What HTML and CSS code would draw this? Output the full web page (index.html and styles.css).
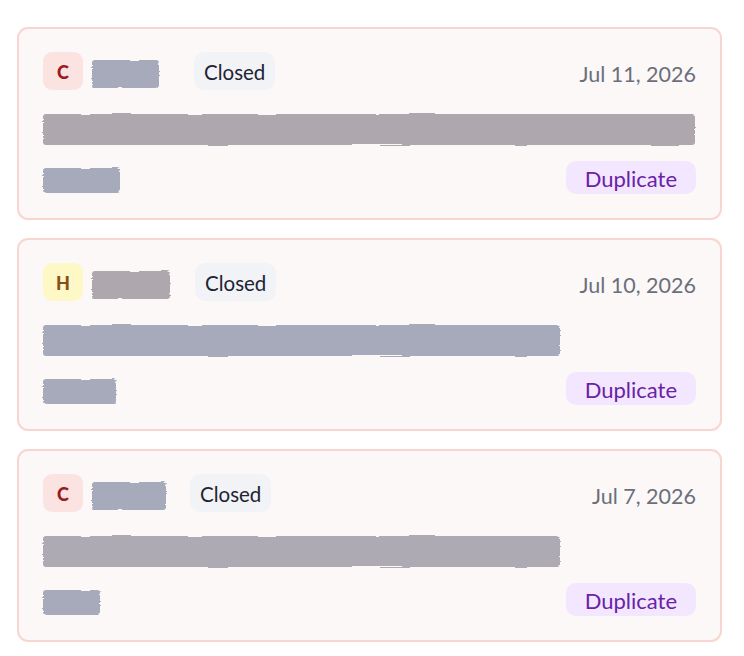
FILE: index.html
```html
<!DOCTYPE html>
<html lang="en">
<head>
<meta charset="utf-8">
<title>Tickets</title>
<link rel="stylesheet" href="styles.css">
</head>
<body>
<svg class="defs" width="0" height="0" aria-hidden="true">
  <filter id="brush" x="-5%" y="-20%" width="110%" height="140%">
    <feTurbulence type="fractalNoise" baseFrequency="0.02 0.7" numOctaves="2" seed="5" result="n"/>
    <feDisplacementMap in="SourceGraphic" in2="n" scale="3.5" xChannelSelector="R" yChannelSelector="G"/>
  </filter>
</svg>
<main class="list">
  <article class="card">
    <div class="row top">
      <span class="avatar avatar-red">C</span>
      <span class="name" style="width:102px"><span class="redact blue" style="width:67px"></span></span>
      <span class="pill">Closed</span>
      <span class="date">Jul 11, 2026</span>
    </div>
    <div class="redact mauve subject" style="width:652px"></div>
    <div class="row bottom">
      <span class="redact blue small" style="width:77px"></span>
      <span class="dup">Duplicate</span>
    </div>
  </article>
  <article class="card">
    <div class="row top">
      <span class="avatar avatar-yellow">H</span>
      <span class="name" style="width:103px"><span class="redact mauve" style="width:78px"></span></span>
      <span class="pill">Closed</span>
      <span class="date">Jul 10, 2026</span>
    </div>
    <div class="redact blue subject" style="width:517px"></div>
    <div class="row bottom">
      <span class="redact blue small" style="width:73px"></span>
      <span class="dup">Duplicate</span>
    </div>
  </article>
  <article class="card">
    <div class="row top">
      <span class="avatar avatar-red">C</span>
      <span class="name" style="width:98px"><span class="redact blue" style="width:74px"></span></span>
      <span class="pill">Closed</span>
      <span class="date">Jul 7, 2026</span>
    </div>
    <div class="redact gray subject" style="width:517px"></div>
    <div class="row bottom">
      <span class="redact blue small" style="width:57px"></span>
      <span class="dup">Duplicate</span>
    </div>
  </article>
</main>
</body>
</html>
```
FILE: styles.css
```css
html, body {
  margin: 0;
  padding: 0;
  background: #ffffff;
}
body {
  font-family: Lato, "Noto Sans", sans-serif;
}
.defs {
  position: absolute;
  width: 0;
  height: 0;
}
.list {
  display: flex;
  flex-direction: column;
  gap: 18px;
  padding: 27px 22px 0 17px;
}
.card {
  border: 2px solid #f8d5d1;
  border-radius: 11px;
  background: #fcf8f7;
  padding: 23px 24px 24px 24px;
  display: flex;
  flex-direction: column;
}
.row {
  display: flex;
  align-items: center;
}
.top {
  height: 38px;
}
.avatar {
  width: 40px;
  height: 38px;
  border-radius: 9px;
  display: flex;
  align-items: center;
  justify-content: center;
  font-weight: 900;
  font-size: 18px;
  margin-right: 9px;
  padding-top: 1px;
  box-sizing: border-box;
}
.avatar-red {
  background: #fae3e1;
  color: #991b1b;
}
.avatar-yellow {
  background: #fef8c6;
  color: #86501a;
}
.name {
  display: flex;
  align-items: center;
  height: 38px;
  padding-top: 6px;
  box-sizing: border-box;
}
.name .redact {
  height: 28px;
}
.redact {
  display: block;
  border-radius: 3px;
  filter: url(#brush);
}
.blue { background: #a7aabb; }
.mauve { background: #aea7ae; }
.gray { background: #aeaab3; }
.pill {
  height: 38px;
  box-sizing: border-box;
  padding: 2px 10px 0;
  border-radius: 10px;
  background: #f1f3f6;
  color: #1f2433;
  font-size: 20.5px;
  display: flex;
  align-items: center;
}
.date {
  margin-left: auto;
  color: #6b6f7b;
  font-size: 21.5px;
  padding-top: 5px;
}
.subject {
  height: 31px;
  margin-top: 24px;
}
.bottom {
  margin-top: 16px;
  height: 33px;
  justify-content: space-between;
  align-items: flex-end;
}
.small {
  height: 25px;
  margin-bottom: 1px;
}
.dup {
  height: 33px;
  box-sizing: border-box;
  padding: 2px 19px 0;
  border-radius: 10px;
  background: #f2e7fe;
  color: #6b21a8;
  font-size: 22px;
  display: flex;
  align-items: center;
}
```
